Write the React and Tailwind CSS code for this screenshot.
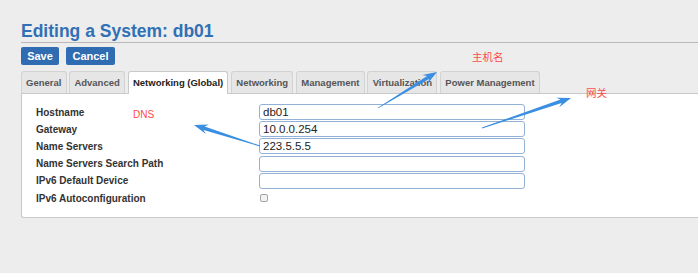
import React from 'react';

const tabs = [
    { name: 'General', w: 'w-[45.5px]' },
    { name: 'Advanced', w: 'w-[56.2px]' },
    { name: 'Networking (Global)', w: 'w-[100.8px]' },
    { name: 'Networking', w: 'w-[62.5px]' },
    { name: 'Management', w: 'w-[68.8px]' },
    { name: 'Virtualization', w: 'w-[70.2px]' },
    { name: 'Power Management', w: 'w-[100px]' },
];

const fields = [
    { label: 'Hostname', value: 'db01' },
    { label: 'Gateway', value: '10.0.0.254' },
    { label: 'Name Servers', value: '223.5.5.5' },
    { label: 'Name Servers Search Path', value: '' },
    { label: 'IPv6 Default Device', value: '' },
];

// tapered callout arrow, tail -> tip
const arrowPoints = (x1, y1, x2, y2) => {
    const dx = x2 - x1;
    const dy = y2 - y1;
    const len = Math.hypot(dx, dy);
    const ux = dx / len;
    const uy = dy / len;
    const nx = -uy;
    const ny = ux;
    const head = 14;
    const headW = 5;
    const shaftW = 1.8;
    const p = (along, side) => [x2 - ux * along + nx * side, y2 - uy * along + ny * side];
    const pts = [
        [x1 + nx * 0.4, y1 + ny * 0.4],
        p(head * 0.75, shaftW),
        p(head, headW),
        [x2, y2],
        p(head, -headW),
        p(head * 0.75, -shaftW),
        [x1 - nx * 0.4, y1 - ny * 0.4],
    ];
    return pts.map(([x, y]) => `${x.toFixed(1)},${y.toFixed(1)}`).join(' ');
};

const App = () => {
    return (
        <div className="relative min-h-screen overflow-hidden bg-[#ededed] font-['Liberation_Sans',Arial,sans-serif]">
            <div className="pl-[21px] pt-[22px]">
                <h1 className="border-b border-[#b8b8b8] pb-[2px] text-[17.5px] font-bold leading-[18px] text-[#3170b5]">
                    Editing a System: db01
                </h1>

                <div className="mt-[4px] flex gap-[7px]">
                    <button className="h-[18px] w-[38px] rounded-[2px] bg-[#2f6cb1] text-[11px] font-bold leading-[18px] text-white">
                        Save
                    </button>
                    <button className="h-[18px] w-[49px] rounded-[2px] bg-[#2f6cb1] text-[11px] font-bold leading-[18px] text-white">
                        Cancel
                    </button>
                </div>

                <div className="mt-[6px] flex items-start gap-[2.5px]">
                    {tabs.map((tab) => {
                        const active = tab.name === 'Networking (Global)';
                        return (
                            <div
                                key={tab.name}
                                className={
                                    active
                                        ? `relative z-10 -mb-[1px] h-[23px] ${tab.w} whitespace-nowrap rounded-t-[3px] border border-b-0 border-[#c9c9c9] bg-white text-center text-[9.5px] font-bold leading-[21px] text-[#222]`
                                        : `h-[22px] ${tab.w} whitespace-nowrap rounded-t-[3px] border border-b-0 border-[#d2d2d2] bg-[#e6e6e6] text-center text-[9.5px] font-bold leading-[21px] text-[#555]`
                                }
                            >
                                {tab.name}
                            </div>
                        );
                    })}
                </div>

                <div className="h-[125px] rounded-bl-[3px] border border-r-0 border-[#c9c9c9] bg-white pl-[14px] pt-[9.5px]">
                    {fields.map((f) => (
                        <div key={f.label} className="flex h-[17.2px] items-center">
                            <div className="w-[223px] text-[10px] font-bold text-[#333]">{f.label}</div>
                            <div className="h-[16px] w-[266px] rounded-[3px] border border-[#93b1d6] bg-white pl-[3px] text-[11.5px] leading-[14px] text-[#222]">
                                {f.value}
                            </div>
                        </div>
                    ))}
                    <div className="flex h-[17.2px] items-center">
                        <div className="w-[223px] text-[10px] font-bold text-[#333]">IPv6 Autoconfiguration</div>
                        <div className="ml-[1px] h-[8px] w-[8px] rounded-[2px] border border-[#a6a6a6] bg-[#f2f2f2]" />
                    </div>
                </div>
            </div>

            {/* screenshot annotations */}
            <svg className="pointer-events-none absolute left-0 top-0" width="698" height="273">
                <polygon points={arrowPoints(378, 108, 437, 72)} fill="#3a8fe2" />
                <polygon points={arrowPoints(260, 146, 194, 125)} fill="#3a8fe2" />
                <polygon points={arrowPoints(482, 128, 571, 98)} fill="#3a8fe2" />
            </svg>
            <span className="absolute left-[472px] top-[50px] font-['Noto_Sans_CJK_SC',sans-serif] text-[10.5px] leading-[14px] text-[#ff4b4b]">
                主机名
            </span>
            <span className="absolute left-[586px] top-[86px] font-['Noto_Sans_CJK_SC',sans-serif] text-[10.5px] leading-[14px] text-[#ff4b4b]">
                网关
            </span>
            <span className="absolute left-[133px] top-[109px] text-[10px] leading-[12px] text-[#ff4b4b]">DNS</span>
        </div>
    );
};

export default App;
